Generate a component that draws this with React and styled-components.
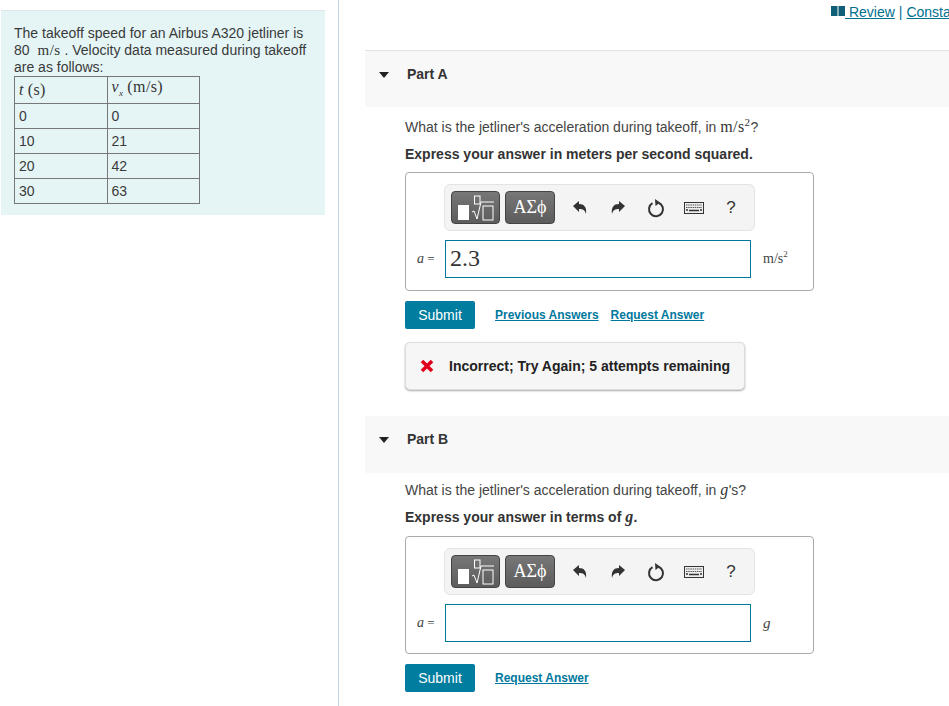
import React from 'react';
import styled, { createGlobalStyle } from 'styled-components';

const GlobalStyle = createGlobalStyle`
  html, body {
    margin: 0;
    padding: 0;
    background: #fff;
    overflow: hidden;
  }
  body {
    font-family: "Liberation Sans", Arial, sans-serif;
    font-size: 14px;
    color: #333;
  }
`;

const Page = styled.div`
  display: flex;
  width: 949px;
  height: 706px;
  overflow: hidden;
`;

// left column with the intro text
const Sidebar = styled.div`
  flex: 0 0 339px;
  box-sizing: border-box;
  border-right: 1px solid #c5d6e3;
  padding: 10px 13px 0 1px;
`;

const Intro = styled.div`
  box-sizing: border-box;
  height: 205px;
  background: #e5f5f6;
  border-top: 1px solid #dde6ea;
  padding: 14px 13px 0;
  font-size: 14px;
  line-height: 17px;
  color: #3a3a3a;
`;

const Math = styled.span`
  font-family: "Liberation Serif", "DejaVu Serif", serif;
  font-size: ${p => p.$size || 16}px;
  font-style: ${p => (p.$italic ? 'italic' : 'normal')};
  letter-spacing: 0.4px;
  color: #333;
`;

const DataTable = styled.table`
  border-collapse: collapse;
  width: 186px;
  table-layout: fixed;
  td, th {
    border: 1px solid #777;
    padding: 0 0 0 4px;
    font-weight: normal;
    text-align: left;
    height: 24px;
    line-height: 16px;
    font-size: 14px;
  }
  th {
    height: 26px;
  }
`;

const Main = styled.div`
  flex: 1;
  min-width: 0;
  padding-left: 26px;
  overflow: hidden;
`;

const TopLinks = styled.div`
  height: 50px;
  box-sizing: border-box;
  padding: 4px 0 0 466px;
  display: flex;
  align-items: flex-start;
  white-space: nowrap;
  line-height: 16px;
  font-size: 14px;
  color: #00708f;
`;

const TopLink = styled.a`
  color: #00708f;
  text-decoration: underline;
  white-space: pre;
`;

const Separator = styled.span`
  padding: 0 4px;
`;

const BookIcon = styled.svg`
  margin: 2px 0 0 0;
  flex: none;
`;

const PartHeader = styled.div`
  height: 57px;
  box-sizing: border-box;
  background: #f8f8f8;
  border-top: ${p => (p.$ruled ? '1px solid #e2e2e2' : 'none')};
  display: flex;
  align-items: flex-start;
  padding: ${p => (p.$ruled ? '15px' : '15px')} 0 0 14px;
  font-weight: bold;
  color: #333;
  line-height: 16px;
`;

const Caret = styled.span`
  width: 0;
  height: 0;
  margin: 6px 18px 0 0;
  border-left: 5.5px solid transparent;
  border-right: 5.5px solid transparent;
  border-top: 6px solid #222;
`;

const PartBody = styled.div`
  padding-left: 40px;
`;

const Question = styled.div`
  margin-top: ${p => p.$top}px;
  line-height: 18px;
  height: 18px;
  color: #444;
`;

const Instruction = styled.div`
  margin-top: 9px;
  line-height: 18px;
  height: 18px;
  font-weight: bold;
  color: #333;
`;

const AnswerBox = styled.div`
  box-sizing: border-box;
  width: 409px;
  height: ${p => p.$height}px;
  margin-top: ${p => p.$top}px;
  border: 1px solid #aaa;
  border-radius: 4px;
  padding: 11px 0 0 11px;
`;

const Toolbar = styled.div`
  box-sizing: border-box;
  width: 311px;
  height: 47px;
  margin-left: 27px;
  background: #f4f4f4;
  border: 1px solid #e3e3e3;
  border-radius: 6px;
  display: flex;
  align-items: center;
  padding-left: 6px;
`;

const ToolButton = styled.div`
  box-sizing: border-box;
  width: ${p => p.$width}px;
  height: 33px;
  margin-right: 5px;
  border: 1px solid #444;
  border-radius: 4px;
  background: linear-gradient(#777, #5c5c5c);
  color: #fff;
  display: flex;
  align-items: center;
  justify-content: center;
  font-family: "Liberation Serif", serif;
  font-size: 18px;
`;

const IconSlot = styled.div`
  width: 38px;
  height: 33px;
  display: flex;
  align-items: center;
  justify-content: center;
  color: #333;
  font-size: 17px;
  margin-left: ${p => p.$left || 0}px;
`;

const InputRow = styled.div`
  display: flex;
  align-items: center;
  margin-top: 9px;
  height: 38px;
`;

const VarLabel = styled.div`
  width: 28px;
  flex: none;
  font-family: "Liberation Serif", serif;
  font-size: 13px;
  color: #444;
  i { font-size: 14px; }
`;

const AnswerInput = styled.div`
  box-sizing: border-box;
  width: 306px;
  height: 38px;
  flex: none;
  border: 1px solid #00789e;
  padding-left: 4px;
  font-family: "Liberation Serif", serif;
  font-size: 24px;
  line-height: 35px;
  color: #333;
`;

const Unit = styled.div`
  margin-left: 12px;
  font-family: "Liberation Serif", serif;
  font-size: 14px;
  color: #444;
  sup { font-size: 9px; line-height: 0; }
  i { font-size: 15px; }
`;

const ActionRow = styled.div`
  display: flex;
  align-items: center;
  margin-top: 10px;
  height: 28px;
`;

const SubmitButton = styled.div`
  width: 70px;
  height: 28px;
  border-radius: 2px;
  background: #007d9f;
  color: #fff;
  line-height: 28px;
  text-align: center;
  margin-right: 20px;
`;

const ActionLink = styled.a`
  color: #00789e;
  font-size: 12px;
  font-weight: bold;
  text-decoration: underline;
  margin-right: 12px;
`;

const Feedback = styled.div`
  box-sizing: border-box;
  width: 340px;
  height: 48px;
  margin: 13px 0 26px;
  background: #f6f6f6;
  border: 1px solid #ddd;
  border-radius: 5px;
  box-shadow: 0 1px 2px #aaa;
  display: flex;
  align-items: center;
  padding-left: 14px;
  font-weight: bold;
  color: #222;
`;

const CrossIcon = styled.svg`
  margin-right: 15px;
  flex: none;
`;

function MathToolbar() {
  return (
    <Toolbar>
      <ToolButton $width={49}>
        <svg width="40" height="28" viewBox="0 0 40 28">
          <rect x="2" y="11" width="11" height="15" fill="#fff" />
          <rect x="18.5" y="2" width="5.5" height="8" fill="none" stroke="#fff" strokeWidth="1" />
          <path d="M16 18l2-1 3 8 4-17h13" fill="none" stroke="#fff" strokeWidth="1" />
          <rect x="27" y="12" width="10" height="14" fill="none" stroke="#fff" strokeWidth="1" />
        </svg>
      </ToolButton>
      <ToolButton $width={50}>ΑΣϕ</ToolButton>
      <IconSlot $left={1}>
        <svg width="16" height="16" viewBox="0 0 16 16">
          <path d="M1 6l6-5v3c5 0 8 3 7 10-1-4-3-5-7-5v3z" fill="#333" />
        </svg>
      </IconSlot>
      <IconSlot>
        <svg width="16" height="16" viewBox="0 0 16 16">
          <path d="M15 6l-6-5v3c-5 0-8 3-7 10 1-4 3-5 7-5v3z" fill="#333" />
        </svg>
      </IconSlot>
      <IconSlot>
        <svg width="18" height="20" viewBox="0 0 18 20">
          <path d="M5.5 5.2a7 7 0 1 0 6 -.5" fill="none" stroke="#333" strokeWidth="2" />
          <path d="M8 1l5 3.5-4.5 3.5z" fill="#333" />
        </svg>
      </IconSlot>
      <IconSlot>
        <svg width="20" height="12" viewBox="0 0 20 12">
          <rect x="0.5" y="0.5" width="19" height="11" fill="#eee" stroke="#333" />
          <path d="M2 3h16M2 5.5h16" stroke="#555" strokeWidth="1.2" strokeDasharray="1.5 .7" />
          <path d="M2 8h2M5 8.500h10M16 8h2" stroke="#333" strokeWidth="1.5" />
        </svg>
      </IconSlot>
      <IconSlot $left={-1}>?</IconSlot>
    </Toolbar>
  );
}

export default function App() {
  return (
    <Page>
      <GlobalStyle />
      <Sidebar>
        <Intro>
          The takeoff speed for an Airbus A320 jetliner is<br />
          80 <Math $size={15}>&nbsp;m/s</Math> . Velocity data measured during takeoff<br />
          are as follows:
          <DataTable>
            <tbody>
              <tr>
                <th><Math $italic>t</Math> <Math>(s)</Math></th>
                <th><Math $italic>v<sub style={{ fontSize: 9 }}>x</sub></Math> <Math>(m/s)</Math></th>
              </tr>
              <tr><td>0</td><td>0</td></tr>
              <tr><td>10</td><td>21</td></tr>
              <tr><td>20</td><td>42</td></tr>
              <tr><td>30</td><td>63</td></tr>
            </tbody>
          </DataTable>
        </Intro>
      </Sidebar>
      <Main>
        <TopLinks>
          <BookIcon width="14" height="11" viewBox="0 0 14 11">
            <rect x="0" y="0" width="6.500" height="10" fill="#0f5f78" />
            <rect x="7.500" y="0" width="6.500" height="10" fill="#0f5f78" />
          </BookIcon>
          <TopLink> Review</TopLink>
          <Separator>|</Separator>
          <TopLink>Constants</TopLink>
        </TopLinks>

        <PartHeader $ruled><Caret />Part A</PartHeader>
        <PartBody>
          <Question $top={11}>
            What is the jetliner's acceleration during takeoff, in <Math>m/s<sup style={{ fontSize: 11, lineHeight: 0 }}>2</sup></Math>?
          </Question>
          <Instruction>Express your answer in meters per second squared.</Instruction>
          <AnswerBox $height={119} $top={9}>
            <MathToolbar />
            <InputRow>
              <VarLabel><i>a</i> =</VarLabel>
              <AnswerInput>2.3</AnswerInput>
              <Unit>m/s<sup>2</sup></Unit>
            </InputRow>
          </AnswerBox>
          <ActionRow>
            <SubmitButton>Submit</SubmitButton>
            <ActionLink>Previous Answers</ActionLink>
            <ActionLink>Request Answer</ActionLink>
          </ActionRow>
          <Feedback>
            <CrossIcon width="14" height="14" viewBox="0 0 14 14">
              <path d="M2 2l10 10M12 2L2 12" stroke="#e0001b" strokeWidth="3.600" />
            </CrossIcon>
            Incorrect; Try Again; 5 attempts remaining
          </Feedback>
        </PartBody>

        <PartHeader><Caret />Part B</PartHeader>
        <PartBody>
          <Question $top={8}>
            What is the jetliner's acceleration during takeoff, in <Math $italic>g</Math>'s?
          </Question>
          <Instruction>Express your answer in terms of <Math $italic>g</Math>.</Instruction>
          <AnswerBox $height={118} $top={10}>
            <MathToolbar />
            <InputRow>
              <VarLabel><i>a</i> =</VarLabel>
              <AnswerInput />
              <Unit><i>g</i></Unit>
            </InputRow>
          </AnswerBox>
          <ActionRow>
            <SubmitButton>Submit</SubmitButton>
            <ActionLink>Request Answer</ActionLink>
          </ActionRow>
        </PartBody>
      </Main>
    </Page>
  );
}
